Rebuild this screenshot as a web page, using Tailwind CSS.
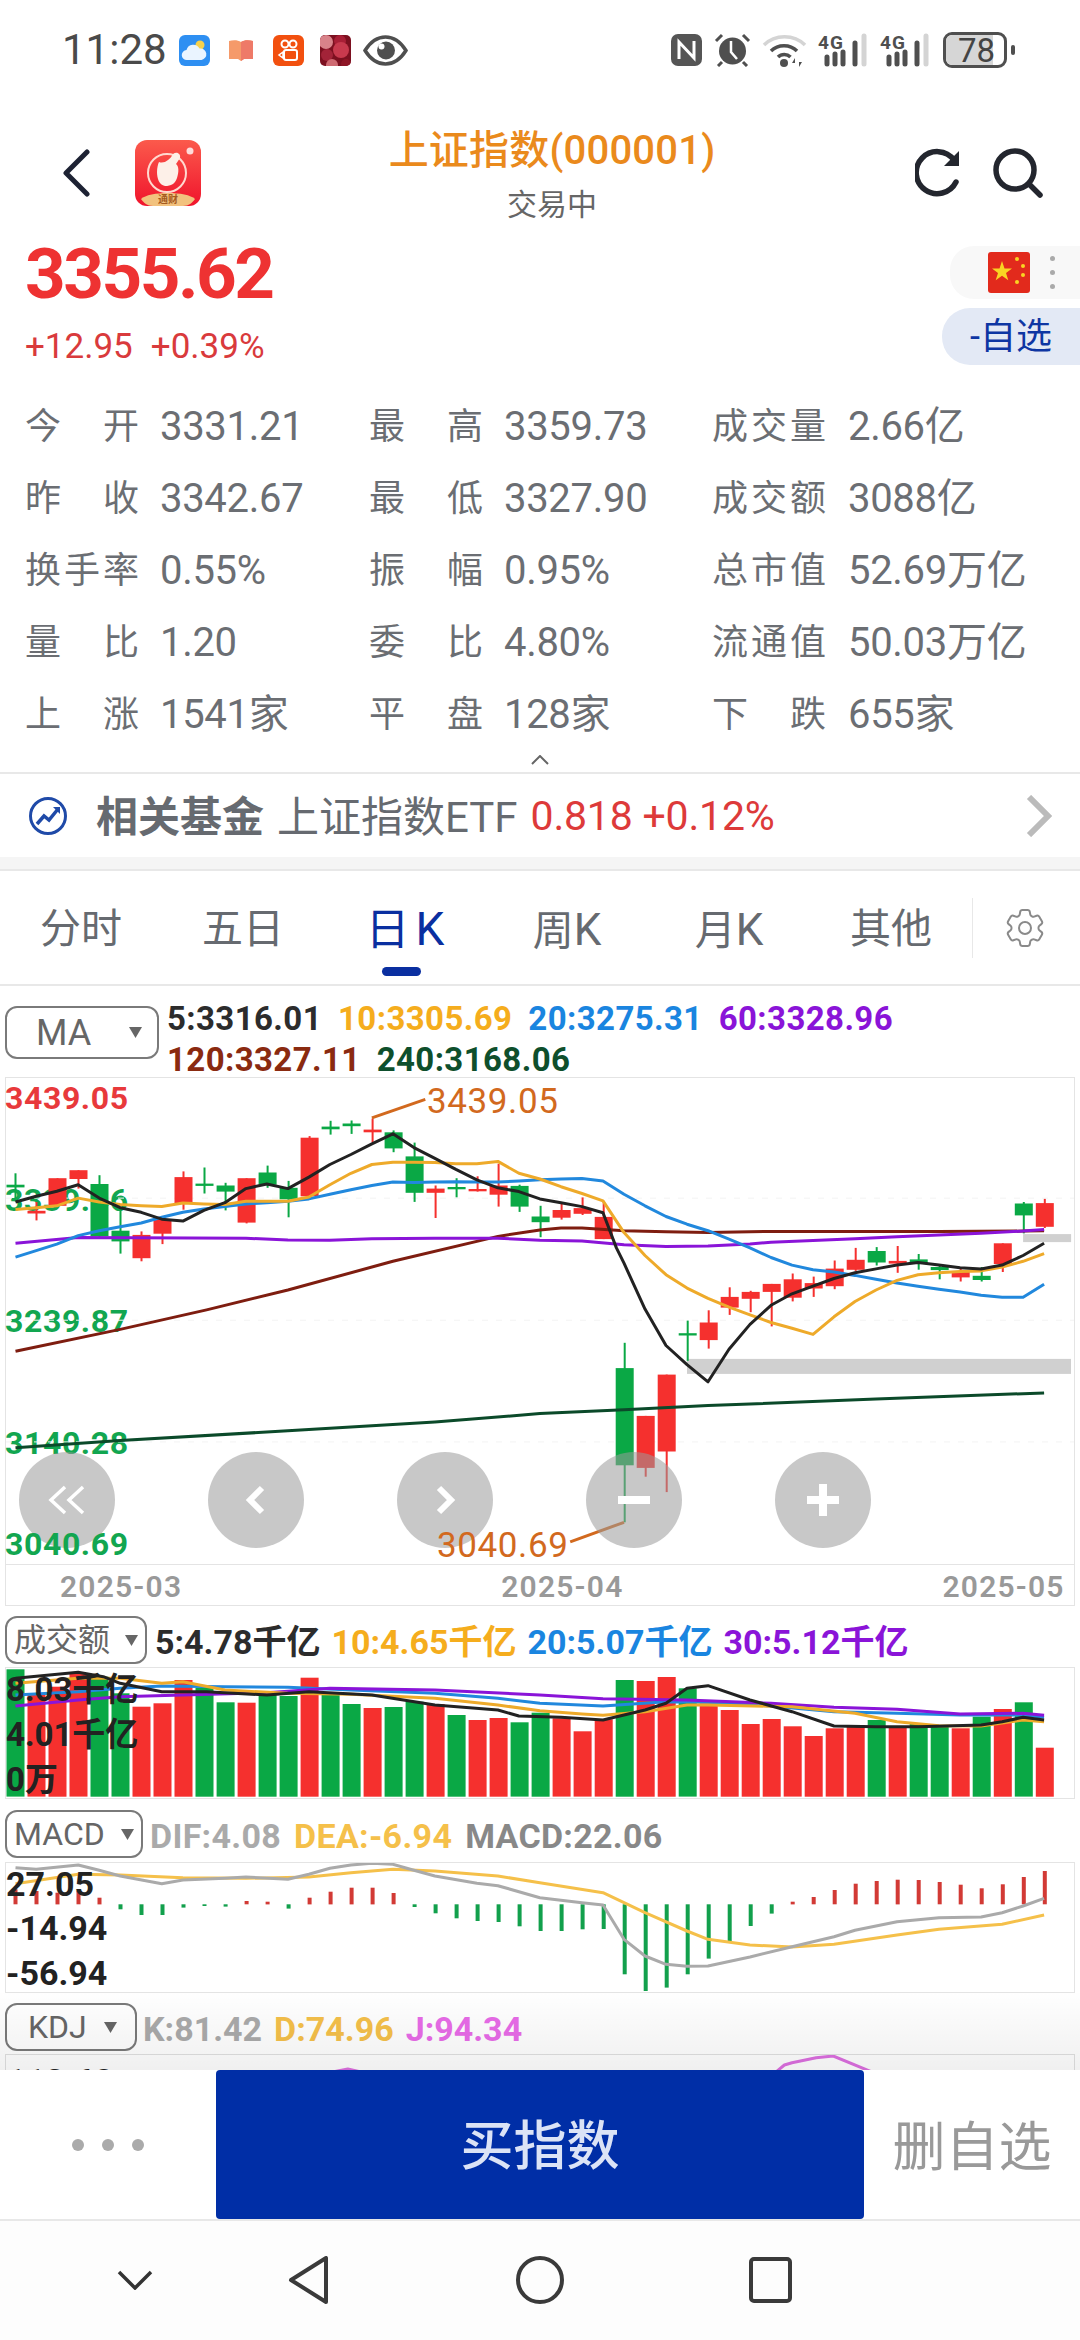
<!DOCTYPE html>
<html lang="zh-CN">
  <head>
    <meta charset="UTF-8" />
    <meta name="viewport" content="width=device-width,initial-scale=1.0" />
    <title>上证指数</title>
    <script src="https://cdn.jsdelivr.net/npm/@tailwindcss/browser@4"></script>
  </head>
  <body class="bg-white">
    <div class="w-[1080px] h-[2340px] overflow-hidden flex flex-col bg-white [font-family:Roboto,'Noto_Sans_CJK_SC',sans-serif]">
      <!-- status bar -->
      <div class="h-[100px] shrink-0 flex items-center pl-[62px] text-[#4a4a4a]">
        <span class="w-[104px] text-[42px] leading-none whitespace-nowrap">11:28</span>
        <svg class="ml-[13px]" width="31" height="31" viewBox="0 0 31 31">
          <rect width="31" height="31" rx="6" fill="#2e8ff2" />
          <circle cx="21" cy="10" r="4.5" fill="#f7d14c" />
          <path d="M8 25a5 5 0 0 1-.5-10 7 7 0 0 1 13-1.500 5.800 5.800 0 0 1 2 11.500z" fill="#eaf4ff" />
        </svg>
        <svg class="ml-[19px]" width="24" height="21" viewBox="0 0 24 21">
          <path d="M0 1c4-1 9-1 12 1 3-2 8-2 12-1v18h-9l-3 2-3-2H0z" fill="#f59a6a" />
          <path d="M12 2c3-2 8-2 12-1v18h-9l-3 2z" fill="#ee7a68" />
        </svg>
        <svg class="ml-[20px]" width="31" height="31" viewBox="0 0 31 31">
          <rect width="31" height="31" rx="6" fill="#f2500f" />
          <circle cx="12" cy="9" r="3.500" fill="none" stroke="#fff" stroke-width="2" />
          <circle cx="20" cy="9" r="3.500" fill="none" stroke="#fff" stroke-width="2" />
          <rect x="11" y="15" width="13" height="10" rx="2" fill="none" stroke="#fff" stroke-width="2" />
          <path d="M10 17l-4 3 4 3z" fill="none" stroke="#fff" stroke-width="1.500" />
        </svg>
        <svg class="ml-[16px]" width="31" height="31" viewBox="0 0 31 31">
          <defs>
            <clipPath id="applebox"><rect width="31" height="31" rx="5" /></clipPath>
          </defs>
          <g clip-path="url(#applebox)">
            <rect width="31" height="31" fill="#7c1020" />
            <circle cx="6" cy="7" r="7" fill="#d8838a" />
            <circle cx="20" cy="6" r="6" fill="#a81f36" />
            <circle cx="21" cy="15" r="8" fill="#c83a4e" />
            <circle cx="7" cy="20" r="6" fill="#a32338" />
            <circle cx="12" cy="30" r="6" fill="#cf6a72" />
            <circle cx="26" cy="29" r="5" fill="#8e1626" />
          </g>
        </svg>
        <svg class="ml-[12px]" width="45" height="31" viewBox="0 0 45 31">
          <path d="M2 15.500C8 6 15 2 22.500 2S37 6 43 15.500C37 25 30 29 22.500 29S8 25 2 15.500z" fill="none" stroke="#4f4f4f" stroke-width="3.500" />
          <circle cx="23" cy="15.500" r="9" fill="#4f4f4f" />
          <circle cx="18.500" cy="11.500" r="3" fill="#fff" />
        </svg>

        <svg class="ml-[263px]" width="31" height="32" viewBox="0 0 31 32">
          <rect width="31" height="32" rx="7" fill="#555" />
          <path d="M8 25V8l15 16V7" fill="none" stroke="#fff" stroke-width="3" />
        </svg>
        <svg class="ml-[12px]" width="37" height="34" viewBox="0 0 37 34">
          <circle cx="18.500" cy="18" r="13.500" fill="#4f4f4f" />
          <path d="M2 8l6-6M35 8l-6-6M8 29l-4 4M29 29l4 4" stroke="#4f4f4f" stroke-width="3" />
          <path d="M17 8v11l6 7" fill="none" stroke="#fff" stroke-width="2.500" />
        </svg>
        <svg class="ml-[11px]" width="45" height="33" viewBox="0 0 45 33">
          <path d="M2 11C13 0 32 0 43 11" fill="none" stroke="#d4d4d4" stroke-width="3.500" />
          <path d="M9 17c7-7 19-7 26 0M16 23c3.500-3.500 9-3.500 12.500 0" fill="none" stroke="#4f4f4f" stroke-width="3.500" />
          <circle cx="22" cy="29" r="4" fill="#4f4f4f" />
          <path d="M33 24l-3 5h3zM37 33l3-5h-3z" fill="#4f4f4f" />
        </svg>
        <svg class="ml-[11px] overflow-visible" width="49" height="34" viewBox="0 0 49 34">
          <text x="0" y="16" font-size="19" font-weight="700" fill="#4f4f4f" textLength="25">4G</text>
          <path d="M9 24v7M17 21v10M25 19v12M37 10v21" stroke="#4f4f4f" stroke-width="5" stroke-linecap="round" />
          <path d="M46 3v28" stroke="#d4d4d4" stroke-width="5" stroke-linecap="round" />
        </svg>
        <svg class="ml-[13px] overflow-visible" width="49" height="34" viewBox="0 0 49 34">
          <text x="0" y="16" font-size="19" font-weight="700" fill="#4f4f4f" textLength="25">4G</text>
          <path d="M9 24v7M17 21v10M25 19v12M37 10v21" stroke="#4f4f4f" stroke-width="5" stroke-linecap="round" />
          <path d="M46 3v28" stroke="#d4d4d4" stroke-width="5" stroke-linecap="round" />
        </svg>
        <div class="ml-[14px] relative w-[64px] h-[36px] rounded-[9px] border-[3px] border-[#4f4f4f] overflow-hidden flex items-center">
          <div class="absolute left-0 top-0 bottom-0 w-[47px] bg-[#d6d6d6]"></div>
          <span class="relative pl-[12px] text-[33px] leading-none text-[#444]">78</span>
        </div>
        <div class="ml-[4px] w-[4px] h-[10px] rounded-full bg-[#4f4f4f]"></div>
      </div>

      <!-- title bar -->
      <div class="h-[146px] shrink-0 flex items-center pl-[63px]">
        <svg width="27" height="48" viewBox="0 0 27 48">
          <path d="M24 3L3 24l21 21" fill="none" stroke="#1d2233" stroke-width="5" stroke-linecap="round" stroke-linejoin="round" />
        </svg>
        <svg class="ml-[45px]" width="66" height="66" viewBox="0 0 66 66">
          <defs>
            <linearGradient id="appbg" x1="0" y1="0" x2="0" y2="1">
              <stop offset="0" stop-color="#fb5a4c" />
              <stop offset="1" stop-color="#f0142c" />
            </linearGradient>
          </defs>
          <rect width="66" height="66" rx="12" fill="url(#appbg)" />
          <circle cx="32" cy="33" r="19" fill="none" stroke="#ffd9cf" stroke-width="2" />
          <path d="M24 22c5 2 11-2 14-8 4-3 8 0 7 4l-4 6c3 2 3 8 1 14-2 6-6 8-12 8-6-1-8-8-8-14 0-4 1-8 2-10z" fill="#fdf0e8" />
          <circle cx="55" cy="11" r="3.500" fill="#fff" opacity="0.800" />
          <path d="M6 59c8-8 46-8 54 0-3 4-6 7-12 7H18c-6 0-9-3-12-7z" fill="#f2c27e" />
          <text x="33" y="63" text-anchor="middle" font-size="10" font-weight="700" fill="#a45a20">通财</text>
        </svg>
        <div class="w-[702px] self-stretch flex flex-col items-center pt-[29px]">
          <div class="text-[40px] leading-[44px] font-medium tracking-[0.2px] text-[#ea8a1c] whitespace-nowrap">上证指数(000001)</div>
          <div class="mt-[14px] text-[30px] leading-[36px] text-[#666]">交易中</div>
        </div>
        <svg class="ml-[12px]" width="47" height="50" viewBox="0 0 47 50">
          <path d="M41 34A21 21 0 1 1 39 12" fill="none" stroke="#23262e" stroke-width="5.500" stroke-linecap="round" />
          <path d="M44 3v15H29" fill="#23262e" />
        </svg>
        <svg class="ml-[30px]" width="51" height="50" viewBox="0 0 51 50">
          <circle cx="23" cy="22" r="19" fill="none" stroke="#23262e" stroke-width="5.500" />
          <path d="M37 36l11 11" stroke="#23262e" stroke-width="5.500" stroke-linecap="round" />
        </svg>
      </div>

      <!-- price -->
      <div class="h-[143px] shrink-0 flex justify-between">
        <div class="pl-[25px]">
          <div class="text-[71px] leading-[56px] font-bold tracking-[-2.5px] text-[#ee3232]">3355.62</div>
          <div class="mt-[30px] flex gap-[18px] text-[35px] leading-[30px] text-[#d93a3c]">
            <span>+12.95</span><span>+0.39%</span>
          </div>
        </div>
        <div class="flex flex-col items-end">
          <div class="w-[130px] h-[53px] rounded-l-[24px] bg-[#f8f8f8] flex items-center pl-[38px]">
            <svg width="42" height="41" viewBox="0 0 42 41">
              <rect width="42" height="41" rx="3" fill="#e22a1c" />
              <path d="M14 9l2.500 7.500h7.500l-6 4.500 2.300 7.300-6.300-4.500-6.300 4.500 2.300-7.300-6-4.500h7.500z" fill="#f9d423" />
              <circle cx="29" cy="7" r="2" fill="#f9d423" />
              <circle cx="35" cy="14" r="2" fill="#f9d423" />
              <circle cx="35" cy="23" r="2" fill="#f9d423" />
              <circle cx="29" cy="30" r="2" fill="#f9d423" />
            </svg>
            <div class="ml-[20px] flex flex-col gap-[9px]">
              <div class="w-[5px] h-[5px] rounded-full bg-[#aaa]"></div>
              <div class="w-[5px] h-[5px] rounded-full bg-[#aaa]"></div>
              <div class="w-[5px] h-[5px] rounded-full bg-[#aaa]"></div>
            </div>
          </div>
          <div class="mt-[9px] w-[138px] h-[57px] rounded-l-[28px] bg-[#e3e9f5] flex items-center pl-[28px] text-[36px] text-[#0e36a3] whitespace-nowrap">-自选</div>
        </div>
      </div>

      <!-- quote table -->
      <div class="h-[360px] shrink-0 grid grid-cols-[344px_343px_1fr] auto-rows-[72px] pl-[25px] pt-[2px] items-center text-[#6b6e73] text-[36px] whitespace-nowrap">
        <div class="flex items-center"><span class="w-[114px] flex justify-between"><span>今</span><span>开</span></span><span class="ml-[21px] text-[40px] tracking-[-0.3px]">3331.21</span></div>
        <div class="flex items-center"><span class="w-[114px] flex justify-between"><span>最</span><span>高</span></span><span class="ml-[21px] text-[40px] tracking-[-0.3px]">3359.73</span></div>
        <div class="flex items-center"><span class="w-[114px] flex justify-between"><span>成</span><span>交</span><span>量</span></span><span class="ml-[22px] text-[40px] tracking-[-0.3px]">2.66亿</span></div>
        <div class="flex items-center"><span class="w-[114px] flex justify-between"><span>昨</span><span>收</span></span><span class="ml-[21px] text-[40px] tracking-[-0.3px]">3342.67</span></div>
        <div class="flex items-center"><span class="w-[114px] flex justify-between"><span>最</span><span>低</span></span><span class="ml-[21px] text-[40px] tracking-[-0.3px]">3327.90</span></div>
        <div class="flex items-center"><span class="w-[114px] flex justify-between"><span>成</span><span>交</span><span>额</span></span><span class="ml-[22px] text-[40px] tracking-[-0.3px]">3088亿</span></div>
        <div class="flex items-center"><span class="w-[114px] flex justify-between"><span>换</span><span>手</span><span>率</span></span><span class="ml-[21px] text-[40px] tracking-[-0.3px]">0.55%</span></div>
        <div class="flex items-center"><span class="w-[114px] flex justify-between"><span>振</span><span>幅</span></span><span class="ml-[21px] text-[40px] tracking-[-0.3px]">0.95%</span></div>
        <div class="flex items-center"><span class="w-[114px] flex justify-between"><span>总</span><span>市</span><span>值</span></span><span class="ml-[22px] text-[40px] tracking-[-0.3px]">52.69万亿</span></div>
        <div class="flex items-center"><span class="w-[114px] flex justify-between"><span>量</span><span>比</span></span><span class="ml-[21px] text-[40px] tracking-[-0.3px]">1.20</span></div>
        <div class="flex items-center"><span class="w-[114px] flex justify-between"><span>委</span><span>比</span></span><span class="ml-[21px] text-[40px] tracking-[-0.3px]">4.80%</span></div>
        <div class="flex items-center"><span class="w-[114px] flex justify-between"><span>流</span><span>通</span><span>值</span></span><span class="ml-[22px] text-[40px] tracking-[-0.3px]">50.03万亿</span></div>
        <div class="flex items-center"><span class="w-[114px] flex justify-between"><span>上</span><span>涨</span></span><span class="ml-[21px] text-[40px] tracking-[-0.3px]">1541家</span></div>
        <div class="flex items-center"><span class="w-[114px] flex justify-between"><span>平</span><span>盘</span></span><span class="ml-[21px] text-[40px] tracking-[-0.3px]">128家</span></div>
        <div class="flex items-center"><span class="w-[114px] flex justify-between"><span>下</span><span>跌</span></span><span class="ml-[22px] text-[40px] tracking-[-0.3px]">655家</span></div>
      </div>

      <!-- collapse -->
      <div class="h-[23px] shrink-0 flex justify-center pt-[6px]">
        <svg width="18" height="10" viewBox="0 0 18 10"><path d="M1 9l8-8 8 8" fill="none" stroke="#666" stroke-width="2" /></svg>
      </div>

      <!-- related fund -->
      <div class="h-[85px] shrink-0 border-t-2 border-[#e8e8e8] flex items-center pl-[29px] text-[42px] text-[#666a70] whitespace-nowrap">
        <svg width="38" height="40" viewBox="0 0 38 40">
          <circle cx="19" cy="20" r="17.500" fill="none" stroke="#1f4aa8" stroke-width="3" />
          <path d="M8 28l7-8 5 4 9-11" fill="none" stroke="#1f4aa8" stroke-width="3.500" />
          <path d="M24 11h7v7z" fill="#1f4aa8" />
        </svg>
        <span class="ml-[29px] pt-[3px] font-bold">相关基金</span>
        <span class="ml-[13px] pt-[3px]">上证指数ETF</span>
        <span class="ml-[13px] pt-[3px] text-[#dd3a3a] text-[41px] tracking-[-0.2px]">0.818 +0.12%</span>
        <svg class="ml-auto mr-[28px]" width="26" height="42" viewBox="0 0 26 42"><path d="M3 2l19 19L3 40" fill="none" stroke="#bbb" stroke-width="6" /></svg>
      </div>
      <div class="h-[12px] shrink-0 bg-[#f5f5f5]"></div>

      <!-- period tabs -->
      <div class="h-[117px] shrink-0 border-y-2 border-[#e8e8e8] flex items-center text-[41px] text-[#666a70]">
        <div class="w-[162px] pt-[4px] text-center">分时</div>
        <div class="w-[162px] pt-[4px] text-center">五日</div>
        <div class="w-[162px] pt-[4px] text-center text-[#0a2fa0] relative"><span class="text-[44px]">日<span class="ml-[6px] text-[46px]">K</span></span>
          <div class="absolute left-[58px] top-[76px] w-[39px] h-[9px] rounded-full bg-[#0a2fa0]"></div>
        </div>
        <div class="w-[162px] pt-[4px] text-center">周<span class="text-[44px]">K</span></div>
        <div class="w-[162px] pt-[4px] text-center">月<span class="text-[44px]">K</span></div>
        <div class="w-[162px] pt-[4px] text-center">其他</div>
        <div class="h-[60px] border-l border-[#e8e8e8]"></div>
        <svg class="ml-[28px]" width="48" height="48" viewBox="0 0 24 24" fill="none" stroke="#8a8a8a" stroke-width="1">
          <path d="M9.594 3.940c.090-.542.560-.940 1.110-.940h2.593c.550 0 1.020.398 1.110.940l.213 1.281c.063.374.313.686.645.870.074.040.147.083.220.127.325.196.720.257 1.075.124l1.217-.456a1.125 1.125 0 0 1 1.370.490l1.296 2.247a1.125 1.125 0 0 1-.260 1.431l-1.003.827c-.293.241-.438.613-.430.992a7.723 7.723 0 0 1 0 .255c-.008.378.137.750.430.991l1.004.827c.424.350.534.955.260 1.430l-1.298 2.247a1.125 1.125 0 0 1-1.369.491l-1.217-.456c-.355-.133-.750-.072-1.076.124a6.470 6.470 0 0 1-.220.128c-.331.183-.581.495-.644.869l-.213 1.281c-.090.543-.560.940-1.110.940h-2.594c-.550 0-1.019-.398-1.110-.940l-.213-1.281c-.062-.374-.312-.686-.644-.870a6.520 6.520 0 0 1-.220-.127c-.325-.196-.720-.257-1.076-.124l-1.217.456a1.125 1.125 0 0 1-1.369-.490l-1.297-2.247a1.125 1.125 0 0 1 .260-1.431l1.004-.827c.292-.240.437-.613.430-.991a6.932 6.932 0 0 1 0-.255c.007-.380-.138-.751-.430-.992l-1.004-.827a1.125 1.125 0 0 1-.260-1.430l1.297-2.247a1.125 1.125 0 0 1 1.370-.491l1.216.456c.356.133.751.072 1.076-.124.072-.044.146-.086.220-.128.332-.183.582-.495.644-.869l.214-1.280z" />
          <circle cx="12" cy="12" r="3" />
        </svg>
      </div>

      <!-- charts, cut off by the bottom bar -->
      <div class="h-[1084px] shrink-0 overflow-hidden relative text-[33px] leading-none font-bold whitespace-nowrap">
        <!-- MA -->
        <div class="h-[91px] pl-[5px] flex items-start pt-[20px]">
          <div class="w-[154px] h-[53px] shrink-0 rounded-[12px] border-2 border-[#7a7a7a] flex items-center pl-[29px] text-[36px] font-normal text-[#666]">MA
            <svg class="ml-[38px]" width="13" height="11" viewBox="0 0 13 11"><path d="M0 0h13L6.500 11z" fill="#666" /></svg>
          </div>
          <div class="ml-[8px] -mt-[4px] tracking-[0.4px]">
            <div class="flex gap-[16px] h-[41px]">
              <span class="text-[#2c2c2c]">5:3316.01</span>
              <span class="text-[#f5ad1d]">10:3305.69</span>
              <span class="text-[#1a85e0]">20:3275.31</span>
              <span class="text-[#8a14d8]">60:3328.96</span>
            </div>
            <div class="flex gap-[16px]">
              <span class="text-[#8a2a10]">120:3327.11</span>
              <span class="text-[#0e4f2c]">240:3168.06</span>
            </div>
          </div>
        </div>
        <div class="mx-[5px] h-[488px] border border-[#e4e4e4] relative">
          <span class="absolute -left-[1px] top-[4px] text-[32px] text-[#e8393b] tracking-[0.6px]">3439.05</span>
          <span class="absolute -left-[1px] top-[106px] text-[32px] text-[#12a650] tracking-[0.6px]">3339.46</span>
          <span class="absolute -left-[1px] top-[227px] text-[32px] text-[#12a650] tracking-[0.6px]">3239.87</span>
          <span class="absolute -left-[1px] top-[349px] text-[32px] text-[#12a650] tracking-[0.6px]">3140.28</span>
          <svg id="kline" class="absolute inset-0 w-full h-full"></svg>
          <div class="absolute left-[13px] top-[374px] w-[96px] h-[96px] rounded-full bg-[#9a9a9a]/55 flex items-center justify-center">
            <svg width="44" height="30" viewBox="0 0 44 30"><path d="M20 2L6 15l14 13M38 2L24 15l14 13" fill="none" stroke="#fff" stroke-width="3.500" /></svg>
          </div>
          <div class="absolute left-[202px] top-[374px] w-[96px] h-[96px] rounded-full bg-[#9a9a9a]/55 flex items-center justify-center">
            <svg width="24" height="30" viewBox="0 0 24 30"><path d="M18 3L6 15l12 12" fill="none" stroke="#fff" stroke-width="6" /></svg>
          </div>
          <div class="absolute left-[391px] top-[374px] w-[96px] h-[96px] rounded-full bg-[#9a9a9a]/55 flex items-center justify-center">
            <svg width="24" height="30" viewBox="0 0 24 30"><path d="M6 3l12 12L6 27" fill="none" stroke="#fff" stroke-width="6" /></svg>
          </div>
          <div class="absolute left-[580px] top-[374px] w-[96px] h-[96px] rounded-full bg-[#9a9a9a]/55 flex items-center justify-center">
            <div class="w-[32px] h-[8px] bg-white"></div>
          </div>
          <div class="absolute left-[769px] top-[374px] w-[96px] h-[96px] rounded-full bg-[#9a9a9a]/55 flex items-center justify-center">
            <svg width="32" height="32" viewBox="0 0 32 32"><path d="M16 0v32M0 16h32" stroke="#fff" stroke-width="8" /></svg>
          </div>
          <span class="absolute -left-[1px] top-[450px] text-[32px] text-[#12a650] tracking-[0.6px]">3040.69</span>
          <span class="absolute left-[421px] top-[6px] text-[#d2691e] font-normal text-[35px] tracking-[0.6px]">3439.05</span>
          <span class="absolute left-[431px] top-[450px] text-[#d2691e] font-normal text-[35px] tracking-[0.6px]">3040.69</span>
        </div>
        <div class="mx-[5px] h-[41px] border-x border-b border-[#e4e4e4] flex gap-[319px] pl-[54px] pt-[3px] items-center text-[30px] font-semibold text-[#999] tracking-[1.2px]">
          <span>2025-03</span><span>2025-04</span><span>2025-05</span>
        </div>

        <!-- turnover -->
        <div class="h-[61px] pl-[5px] flex items-start pt-[10px]">
          <div class="w-[142px] h-[48px] shrink-0 rounded-[12px] border-2 border-[#7a7a7a] flex items-center pl-[7px] text-[32px] font-normal text-[#666]">成交额
            <svg class="ml-[15px]" width="13" height="11" viewBox="0 0 13 11"><path d="M0 0h13L6.500 11z" fill="#666" /></svg>
          </div>
          <div class="ml-[8px] flex gap-[11px] pt-[9px] text-[34px]">
            <span class="text-[#2c2c2c]">5:4.78千亿</span>
            <span class="text-[#f5ad1d]">10:4.65千亿</span>
            <span class="text-[#1a85e0]">20:5.07千亿</span>
            <span class="text-[#8a14d8]">30:5.12千亿</span>
          </div>
        </div>
        <div class="mx-[5px] h-[132px] border border-[#e4e4e4] relative text-[#222]">
          <svg id="volume" class="absolute inset-0 w-full h-full"></svg>
          <span class="absolute left-0 top-[5px]">8.03千亿</span>
          <span class="absolute left-0 top-[50px]">4.01千亿</span>
          <span class="absolute left-0 top-[95px]">0万</span>
        </div>

        <!-- MACD -->
        <div class="h-[63px] pl-[5px] flex items-start pt-[11px]">
          <div class="w-[138px] h-[48px] shrink-0 rounded-[12px] border-2 border-[#7a7a7a] flex items-center pl-[7px] text-[32px] font-normal text-[#666]">MACD
            <svg class="ml-[16px]" width="13" height="11" viewBox="0 0 13 11"><path d="M0 0h13L6.500 11z" fill="#666" /></svg>
          </div>
          <div class="ml-[7px] flex gap-[13px] pt-[9px] text-[34px] tracking-[0.3px]">
            <span class="text-[#aaa]">DIF:4.08</span>
            <span class="text-[#f5c04a]">DEA:-6.94</span>
            <span class="text-[#888]">MACD:22.06</span>
          </div>
        </div>
        <div class="mx-[5px] h-[131px] border border-[#e4e4e4] relative text-[34px] text-[#222]">
          <svg id="macd" class="absolute inset-0 w-full h-full"></svg>
          <span class="absolute left-0 top-[4px]">27.05</span>
          <span class="absolute left-0 top-[48px]">-14.94</span>
          <span class="absolute left-0 top-[93px]">-56.94</span>
        </div>

        <!-- KDJ -->
        <div class="h-[61px] pl-[5px] flex items-start pt-[10px]">
          <div class="w-[132px] h-[48px] shrink-0 rounded-[12px] border-2 border-[#7a7a7a] flex items-center pl-[21px] text-[32px] font-normal text-[#666]">KDJ
            <svg class="ml-[17px]" width="13" height="11" viewBox="0 0 13 11"><path d="M0 0h13L6.500 11z" fill="#666" /></svg>
          </div>
          <div class="ml-[6px] flex gap-[12px] pt-[9px] text-[34px]">
            <span class="text-[#aaa]">K:81.42</span>
            <span class="text-[#f5c04a]">D:74.96</span>
            <span class="text-[#e86be8]">J:94.34</span>
          </div>
        </div>
        <div class="mx-[5px] h-[40px] border-x border-t border-[#e0e0e0] relative text-[34px] text-[#222]">
          <svg id="kdj" class="absolute inset-0 w-full h-full"></svg>
          <span class="absolute left-0 top-[9px]">112.68</span>
        </div>
        <div class="absolute left-0 right-0 bottom-0 h-[80px] bg-linear-to-b from-black/0 to-black/[0.06]"></div>
      </div>

      <!-- action bar -->
      <div class="h-[149px] shrink-0 flex items-center bg-white">
        <div class="w-[216px] flex justify-center gap-[18px]">
          <div class="w-[12px] h-[12px] rounded-full bg-[#aaa]"></div>
          <div class="w-[12px] h-[12px] rounded-full bg-[#aaa]"></div>
          <div class="w-[12px] h-[12px] rounded-full bg-[#aaa]"></div>
        </div>
        <div class="w-[648px] h-full pt-[6px] rounded-[4px] bg-[#002ea6] flex items-center justify-center text-[53px] font-medium text-[#dbe3f6]">买指数</div>
        <div class="flex-1 pt-[8px] text-center text-[53px] text-[#999]">删自选</div>
      </div>

      <!-- system nav -->
      <div class="flex-1 border-t-2 border-[#e8e8e8] bg-[#fdfdfd] flex items-center pl-[117px] pb-[2px]">
        <svg width="36" height="20" viewBox="0 0 36 20"><path d="M2 2l16 16L34 2" fill="none" stroke="#333" stroke-width="3.500" /></svg>
        <svg class="ml-[135px]" width="41" height="48" viewBox="0 0 41 48"><path d="M38 2v44L3 24z" fill="none" stroke="#3a3a3a" stroke-width="4" stroke-linejoin="round" /></svg>
        <svg class="ml-[187px]" width="48" height="48" viewBox="0 0 48 48"><circle cx="24" cy="24" r="22" fill="none" stroke="#3a3a3a" stroke-width="4" /></svg>
        <svg class="ml-[185px]" width="43" height="46" viewBox="0 0 43 46"><rect x="2" y="2" width="39" height="42" rx="3" fill="none" stroke="#3a3a3a" stroke-width="4" /></svg>
      </div>
    </div>

    <script>
      const RED = '#f5302e';
      const GREEN = '#0aa845';
      // chart data below is in reference crop units, sx/sy turn them into svg px
      const sx = (x) => x / 2.904 - 6;

      function line(pts, color, sy, w = 3) {
        let d = pts.map((p) => sx(p[0]).toFixed(1) + ',' + sy(p[1]).toFixed(1)).join(' ');
        return `<polyline points="${d}" fill="none" stroke="${color}" stroke-width="${w}" stroke-linejoin="round" />`;
      }
      function rect(x, y, w, h, color) {
        return `<rect x="${x.toFixed(1)}" y="${y.toFixed(1)}" width="${w}" height="${h.toFixed(1)}" fill="${color}" />`;
      }
      function pairs(a) {
        let out = [];
        for (let i = 0; i < a.length; i += 2) out.push([a[i], a[i + 1]]);
        return out;
      }

      // main k-line: col, wickTop, wickBottom, bodyTop, bodyBottom
      const k = [
        ['g',505,570,535,542],['r',580,628,603,610],['r',518,590,518,590],['r',497,545,497,520],['g',510,675,533,670],
        ['g',595,715,655,683],['r',657,735,666,727],['r',620,690,625,663],['r',500,600,515,583],['g',490,558,532,538],
        ['g',530,602,537,553],['r',518,636,518,634],['g',485,543,503,535],['g',525,620,543,573],['r',408,568,412,565],
        ['g',368,404,383,390],['g',367,402,375,382],['r',362,425,391,398],['g',393,450,398,440],['g',425,580,461,556],
        ['r',537,622,545,556],['g',518,568,541,547],['r',513,553,546,552],['r',480,592,537,561],['g',535,606,538,592],
        ['g',590,672,618,633],['r',580,626,601,621],['r',568,614,596,611],['r',578,677,619,677],['g',948,1417,1014,1268],
        ['r',1139,1298,1139,1275],['r',1031,1338,1031,1232],['g',890,995,923,929],['r',863,963,895,941],['r',803,875,828,856],
        ['r',812,868,815,833],['r',794,905,794,815],['r',767,840,782,830],['r',775,828,792,806],['r',733,808,754,800],
        ['r',700,760,731,757],['g',698,746,708,738],['r',695,765,734,741],['g',716,757,730,740],['g',742,782,750,758],
        ['r',755,788,763,777],['g',750,788,773,784],['r',688,763,688,742],['g',580,662,584,615],['r',572,648,583,645],
      ];
      const syK = (y) => y / 2.613 - 98;
      let s = '';
      [570, 889, 1207].forEach((y) => {
        s += `<line x1="0" x2="1069" y1="${syK(y)}" y2="${syK(y)}" stroke="#f3f3f3" stroke-width="1" stroke-dasharray="6 8" />`;
      });
      s += rect(sx(1995), syK(990), 384, 15, '#d0d0d0');
      s += rect(sx(2971), syK(664), 48, 8, '#d0d0d0');
      k.forEach((c, i) => {
        let x = sx(45 + 61 * i);
        let col = c[0] == 'r' ? RED : GREEN;
        s += rect(x - 1, syK(c[1]), 2, (c[2] - c[1]) / 2.613, col);
        s += rect(x - 9, syK(c[3]), 18, (c[4] - c[3]) / 2.613, col);
      });
      s += line(pairs([45,970,349,913,600,862,836,810,1141,735,1446,670,1568,653,1629,648,1690,648,1812,655,1934,658,2056,660,2239,657,2483,657,2727,657,2971,656,3032,655]), '#7e1d10', syK);
      s += line(pairs([45,1222,349,1203,836,1178,1263,1155,1568,1133,1812,1123,2056,1112,2544,1095,3032,1079]), '#0b4a2a', syK);
      s += line(pairs([45,688,227,673,714,675,836,679,958,680,1080,676,1263,675,1446,675,1568,680,1690,682,1812,692,1934,696,2056,695,2178,690,2239,685,2361,681,2483,676,2605,671,2727,666,2849,662,2971,656,3032,652]), '#8a14d8', syK);
      s += line(pairs([45,724,105,707,165,690,227,668,288,655,349,645,410,635,470,620,531,607,592,598,653,592,714,585,775,582,836,578,897,572,958,560,1019,548,1080,537,1141,528,1202,529,1263,528,1324,527,1385,528,1446,528,1507,525,1568,522,1629,520,1690,519,1751,525,1812,560,1873,590,1934,618,1995,638,2056,655,2117,677,2178,700,2239,725,2300,745,2361,757,2422,763,2483,772,2544,782,2605,792,2666,800,2727,808,2788,815,2849,824,2910,829,2971,829,3032,795]), '#2188dd', syK);
      s += line(pairs([45,600,105,595,165,590,227,570,288,580,349,587,410,590,470,592,531,583,592,585,653,587,714,578,775,578,836,578,897,567,958,535,1019,505,1080,482,1141,476,1202,476,1263,477,1324,480,1385,480,1446,474,1507,505,1568,520,1629,540,1690,558,1751,577,1812,660,1873,720,1934,770,1995,805,2056,832,2117,855,2178,875,2239,895,2300,910,2361,926,2422,880,2483,840,2544,810,2605,785,2666,770,2727,765,2788,762,2849,760,2910,750,2971,735,3032,715]), '#eeaa2a', syK);
      s += line(pairs([45,580,105,565,165,552,227,535,288,570,349,595,410,607,470,625,531,630,592,602,653,582,714,545,775,533,836,545,897,515,958,482,1019,456,1080,428,1141,402,1202,438,1263,466,1324,495,1385,522,1446,543,1507,553,1568,572,1629,582,1690,592,1751,608,1790,700,1812,740,1873,860,1934,955,1995,1005,2056,1050,2117,965,2178,900,2239,850,2300,820,2361,800,2422,780,2483,765,2544,755,2605,745,2666,738,2727,745,2788,752,2849,755,2910,745,2971,720,3032,688]), '#222', syK);
      s += line(pairs([1080,360,1235,312]), '#d2691e', syK);
      s += line(pairs([1812,1417,1656,1468]), '#d2691e', syK);
      document.getElementById('kline').innerHTML = s;

      // turnover bars
      const v = [268,340,320,280,290,340,380,370,300,323,367,368,345,348,293,345,372,384,381,365,372,405,420,414,427,398,415,454,418,300,303,291,325,370,390,432,417,439,468,445,435,420,442,432,435,445,410,387,367,503];
      const syV = (y) => y / 3 - 88;
      s = '';
      v.forEach((top, i) => {
        let col = k[i][0] == 'r' ? RED : GREEN;
        s += rect(sx(45 + 61 * i) - 9, syV(top), 18, (650 - top) / 3, col);
      });
      s += line(pairs([45,345,227,335,349,325,470,318,653,320,836,322,1019,330,1263,340,1446,355,1568,370,1751,378,1934,365,2056,367,2239,378,2422,395,2605,400,2788,405,2971,405,3032,412]), '#2188dd', syV);
      s += line(pairs([45,378,227,360,349,350,531,345,775,338,958,325,1263,330,1568,345,1751,356,1995,360,2239,370,2422,382,2605,388,2788,402,2971,400,3032,406]), '#8a14d8', syV);
      s += line(pairs([45,310,227,295,349,295,470,310,531,305,653,330,836,340,1019,343,1263,355,1446,375,1568,392,1690,402,1751,406,1873,395,1995,375,2056,375,2300,380,2483,400,2605,425,2727,437,2849,438,2971,420,3032,425]), '#eeaa2a', syV);
      s += line(pairs([45,295,227,277,300,290,349,310,470,335,600,335,775,345,897,335,1080,345,1263,375,1446,390,1507,408,1629,412,1751,420,1873,390,1934,370,1995,325,2056,317,2178,360,2300,395,2422,438,2544,440,2666,440,2849,435,2910,425,2971,412,3032,420]), '#222', syV);
      document.getElementById('volume').innerHTML = s;

      // macd sticks, end value per day against the zero line at 970
      const m = [925,930,935,930,950,985,1002,1002,980,975,977,960,962,983,950,932,920,920,936,978,997,1012,1020,1023,1036,1050,1050,1045,1044,1180,1230,1220,1180,1133,1080,1035,998,962,948,927,908,900,896,897,903,911,922,910,888,870];
      const syM = (y) => y / 3 - 282;
      s = '';
      m.forEach((e, i) => {
        let x = sx(45 + 61 * i) - 2;
        if (e < 970) s += rect(x, syM(e), 4, (970 - e) / 3, '#d23a35');
        else s += rect(x, syM(970), 4, (e - 970) / 3, '#12a04c');
      });
      s += line(pairs([45,908,227,880,349,882,531,890,714,892,897,888,1019,875,1141,865,1263,870,1446,885,1568,905,1751,935,1873,995,1995,1050,2056,1075,2178,1092,2300,1098,2422,1090,2605,1062,2727,1045,2910,1030,3032,1002]), '#f5c04a', syM);
      s += line(pairs([45,860,105,865,227,852,288,868,349,885,470,908,531,897,653,892,714,888,836,895,897,880,958,862,1019,852,1080,847,1141,850,1202,868,1263,885,1385,907,1446,914,1568,950,1690,965,1751,972,1812,1075,1873,1125,1934,1150,1995,1156,2056,1155,2178,1128,2300,1097,2422,1067,2483,1048,2605,1022,2727,1010,2849,1008,2910,995,2971,975,3032,952]), '#aaa', syM);
      document.getElementById('macd').innerHTML = s;

      // kdj, only the peaks of J show above the bar
      const syJ = (y) => y / 3 - 474;
      s = line(pairs([970,1472,1010,1464,1045,1472]), '#dd6fe0', syJ);
      s += line(pairs([2250,1476,2278,1452,2300,1445,2370,1430,2420,1425,2530,1472]), '#dd6fe0', syJ);
      document.getElementById('kdj').innerHTML = s;
    </script>
  </body>
</html>
